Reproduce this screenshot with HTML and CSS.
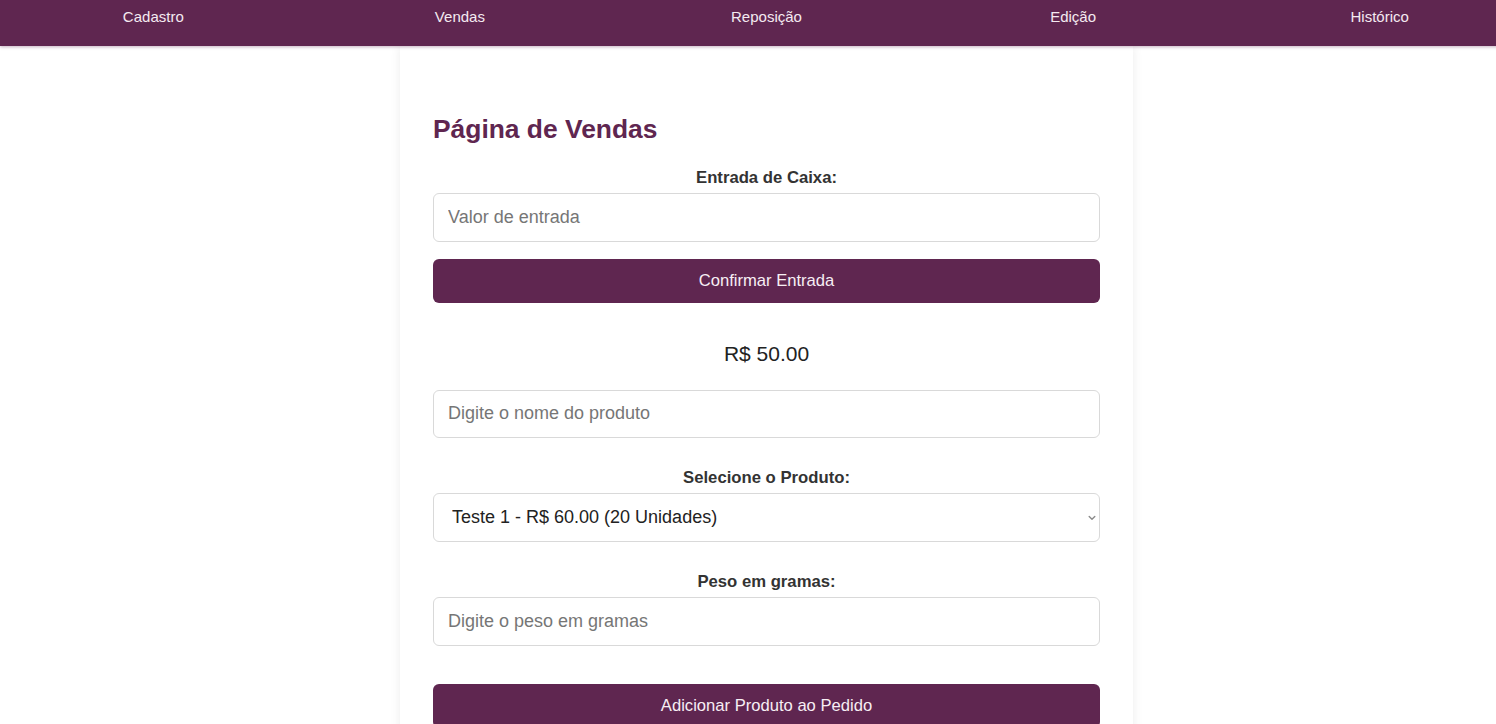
FILE: index.html
```html
<!DOCTYPE html>
<html lang="pt-BR">
<head>
<meta charset="utf-8">
<title>Página de Vendas</title>
<link rel="stylesheet" href="styles.css">
</head>
<body>
<div class="page">
  <nav class="topnav">
    <a class="nav-link" href="#">Cadastro</a>
    <a class="nav-link" href="#">Vendas</a>
    <a class="nav-link" href="#">Reposição</a>
    <a class="nav-link" href="#">Edição</a>
    <a class="nav-link" href="#">Histórico</a>
  </nav>
  <main class="content">
    <section class="card">
      <h2 class="title">Página de Vendas</h2>
      <label class="field-label label-first">Entrada de Caixa:</label>
      <input class="field" type="text" placeholder="Valor de entrada">
      <button class="btn btn-confirm" type="button">Confirmar Entrada</button>
      <p class="amount">R$ 50.00</p>
      <input class="field field-search" type="text" placeholder="Digite o nome do produto">
      <label class="field-label label-next">Selecione o Produto:</label>
      <div class="select-wrap">
        <select class="field field-select">
          <option>Teste 1 - R$ 60.00 (20 Unidades)</option>
        </select>
        <svg class="select-arrow" width="8" height="6" viewBox="0 0 8 6" aria-hidden="true">
          <path d="M1.2 1.6 L4 4.3 L6.8 1.6" fill="none" stroke="#8a8a8a" stroke-width="1.4" stroke-linecap="round" stroke-linejoin="round"/>
        </svg>
      </div>
      <label class="field-label label-next">Peso em gramas:</label>
      <input class="field" type="text" placeholder="Digite o peso em gramas">
      <button class="btn btn-add" type="button">Adicionar Produto ao Pedido</button>
    </section>
  </main>
</div>
</body>
</html>
```

FILE: styles.css
```css
html, body {
  margin: 0;
  padding: 0;
  background: #ffffff;
  overflow: hidden;
}

body {
  font-family: "Liberation Sans", Arial, sans-serif;
  color: #333333;
}

.page {
  width: 1533px;
}

.topnav {
  position: relative;
  z-index: 2;
  display: flex;
  align-items: flex-start;
  height: 46px;
  box-sizing: border-box;
  padding-top: 8px;
  background: #5f2650;
  box-shadow: 0 1px 3px rgba(95, 38, 80, 0.35);
}

.nav-link {
  flex: 1;
  text-align: center;
  font-size: 15px;
  line-height: 17px;
  color: #f4eaf1;
  text-decoration: none;
}

.content {
  display: flex;
  justify-content: center;
}

.card {
  width: 733px;
  box-sizing: border-box;
  padding: 68px 33px 40px;
  background: #ffffff;
  box-shadow: 0 0 10px rgba(0, 0, 0, 0.08);
  display: flex;
  flex-direction: column;
  min-height: 700px;
}

.title {
  margin: 0;
  font-size: 26.4px;
  line-height: 30px;
  font-weight: bold;
  color: #5f2650;
}

.field-label {
  display: block;
  text-align: center;
  font-size: 16.7px;
  line-height: 19px;
  font-weight: bold;
  color: #333333;
  margin-bottom: 6px;
}

.label-first {
  margin-top: 24px;
}

.label-next {
  margin-top: 30px;
}

.field {
  box-sizing: border-box;
  width: 100%;
  height: 48.5px;
  margin: 0;
  padding: 0 14px;
  font-family: "Liberation Sans", Arial, sans-serif;
  font-size: 18px;
  color: #222222;
  background: #ffffff;
  border: 1px solid #d9d9d9;
  border-radius: 6px;
  outline: none;
}

.field::placeholder {
  color: #767676;
}

.select-wrap {
  position: relative;
  margin-top: -0.5px;
}

.field-select {
  display: block;
  height: 49.5px;
  padding-left: 18px;
  padding-right: 30px;
  color: #222222;
  appearance: none;
  -webkit-appearance: none;
}

.select-arrow {
  position: absolute;
  right: 4px;
  top: 22px;
  pointer-events: none;
}

.field-search {
  margin-top: 23.5px;
}

.btn {
  box-sizing: border-box;
  width: 100%;
  height: 44px;
  border: none;
  border-radius: 6px;
  background: #5f2650;
  color: #f7eef4;
  font-family: "Liberation Sans", Arial, sans-serif;
  font-size: 16.6px;
  cursor: pointer;
}

.btn-confirm {
  margin-top: 17.5px;
}

.btn-add {
  margin-top: 38px;
}

.amount {
  margin: 39px 0 0;
  text-align: center;
  font-size: 21px;
  line-height: 24px;
  color: #222222;
}
```
